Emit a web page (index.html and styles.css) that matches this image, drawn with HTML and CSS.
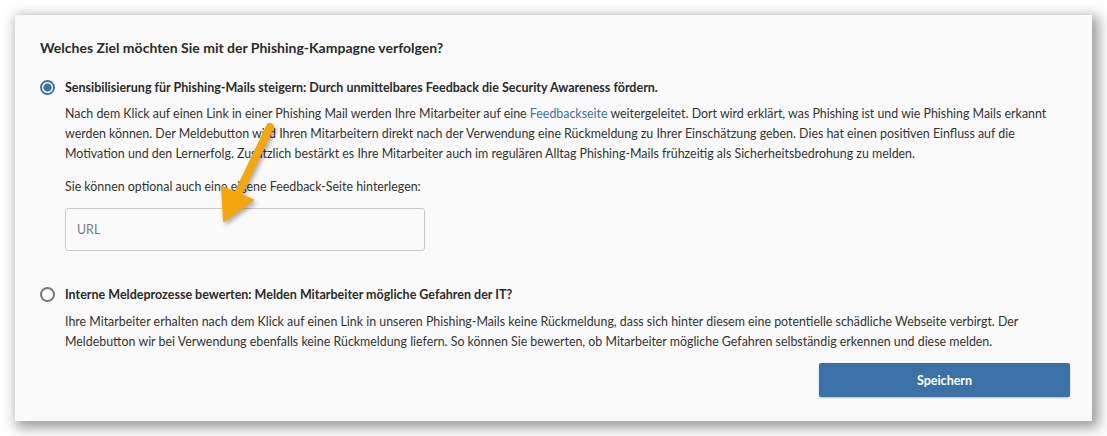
FILE: index.html
```html
<!DOCTYPE html>
<html lang="de">
<head>
  <meta charset="UTF-8">
  <title>Phishing-Kampagne</title>
  <link rel="stylesheet" href="styles.css">
</head>
<body>
  <div class="card">
    <h2 class="title">Welches Ziel möchten Sie mit der Phishing-Kampagne verfolgen?</h2>

    <div class="option">
      <span class="radio checked"></span>
      <div class="option-body">
        <div class="option-label">Sensibilisierung für Phishing-Mails steigern: Durch unmittelbares Feedback die Security Awareness fördern.</div>
        <p class="option-text">Nach dem Klick auf einen Link in einer Phishing Mail werden Ihre Mitarbeiter auf eine <a href="#">Feedbackseite</a> weitergeleitet. Dort wird erklärt, was Phishing ist und wie Phishing Mails erkannt werden können. Der Meldebutton wird Ihren Mitarbeitern direkt nach der Verwendung eine Rückmeldung zu Ihrer Einschätzung geben. Dies hat einen positiven Einfluss auf die Motivation und den Lernerfolg. Zusätzlich bestärkt es Ihre Mitarbeiter auch im regulären Alltag Phishing-Mails frühzeitig als Sicherheitsbedrohung zu melden.</p>
        <p class="hint">Sie können optional auch eine eigene Feedback-Seite hinterlegen:</p>
        <input class="url" type="text" placeholder="URL">
      </div>
    </div>

    <div class="option second">
      <span class="radio"></span>
      <div class="option-body">
        <div class="option-label">Interne Meldeprozesse bewerten: Melden Mitarbeiter mögliche Gefahren der IT?</div>
        <p class="option-text">Ihre Mitarbeiter erhalten nach dem Klick auf einen Link in unseren Phishing-Mails keine Rückmeldung, dass sich hinter diesem eine potentielle schädliche Webseite verbirgt. Der Meldebutton wir bei Verwendung ebenfalls keine Rückmeldung liefern. So können Sie bewerten, ob Mitarbeiter mögliche Gefahren selbständig erkennen und diese melden.</p>
      </div>
    </div>

    <div class="actions">
      <button class="save">Speichern</button>
    </div>

    <svg class="arrow" width="80" height="115" viewBox="0 0 80 115">
      <line x1="70" y1="13" x2="38" y2="80" stroke="#f5a60b" stroke-width="8" stroke-linecap="round"/>
      <polygon points="22,73 53,86 24,107" fill="#f5a60b" stroke="#f5a60b" stroke-width="2" stroke-linejoin="round"/>
    </svg>
  </div>
</body>
</html>
```
FILE: styles.css
```css
html, body {
  margin: 0;
  background: #fff;
}

body {
  padding: 15px;
  font-family: 'Lato', sans-serif;
  color: #333;
}

.card {
  position: relative;
  width: 1077px;
  height: 406px;
  box-sizing: border-box;
  padding: 23px 22px 24px 25px;
  background: #fafafa;
  box-shadow: 4px 4px 12px 3px rgba(0,0,0,.38);
}

.title {
  margin: 0;
  font-size: 14px;
  line-height: 20px;
  font-weight: bold;
  color: #2b2b2b;
}

.option {
  display: flex;
  gap: 10px;
  margin-top: 20px;
}

.option.second { margin-top: 34px; }

.radio {
  flex: none;
  width: 15px;
  height: 15px;
  margin-top: 2px;
  box-sizing: border-box;
  border: 2px solid #767676;
  border-radius: 50%;
  background: #fff;
}

.radio.checked {
  border-color: #3b73a9;
  background: radial-gradient(circle, #3b73a9 0 3.8px, #fff 4.4px);
}

.option-body { flex: 1; }

.option-label {
  font-size: 12.5px;
  line-height: 20px;
  font-weight: bold;
  color: #2b2b2b;
}

.option-text, .hint {
  margin: 6px 0 0;
  font-size: 12.4px;
  line-height: 20px;
}

.second .option-text { margin-top: 7px; }

.option-text a {
  color: #3b73a9;
  text-decoration: none;
}

.hint { margin-top: 13px; }

.url {
  display: block;
  margin-top: 11px;
  width: 360px;
  height: 43px;
  box-sizing: border-box;
  padding: 0 11px;
  border: 1px solid #c9c9c9;
  border-radius: 3px;
  background: #fafafa;
  font-family: 'Lato', sans-serif;
  font-size: 12.4px;
}

.url::placeholder { color: #7a7a7a; }

.actions {
  display: flex;
  justify-content: flex-end;
  margin-top: 11px;
}

.save {
  width: 251px;
  height: 34px;
  border: 0;
  border-radius: 2px;
  background: #3a72a8;
  color: #fff;
  font-family: 'Lato', sans-serif;
  font-size: 12.5px;
  font-weight: bold;
  box-shadow: 0 1px 2px rgba(0,0,0,.25);
}

.arrow {
  position: absolute;
  left: 185px;
  top: 99px;
  filter: drop-shadow(2px 3px 2px rgba(0,0,0,.3));
}
```
